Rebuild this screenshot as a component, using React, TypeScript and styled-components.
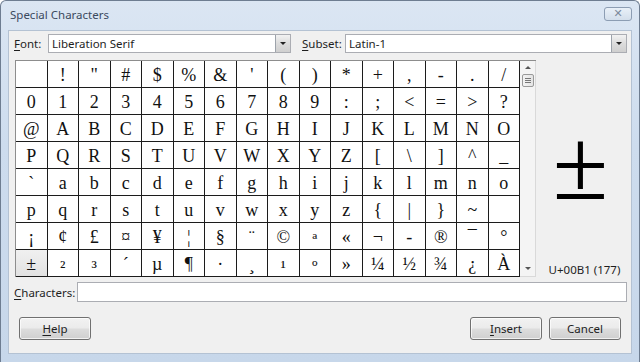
import React from 'react';
import styled, { createGlobalStyle } from 'styled-components';

const GlobalStyle = createGlobalStyle`
  html, body {
    margin: 0;
    padding: 0;
    background: #ffffff;
  }
  body {
    font-family: "Noto Sans", "Open Sans", sans-serif;
  }
`;

const Window = styled.div`
  width: 640px;
  height: 362px;
  box-sizing: border-box;
  border: 1px solid #6e7d91;
  border-bottom: none;
  border-radius: 6px 6px 0 0;
  background: linear-gradient(180deg, #dbe6f3 0%, #cddcee 40%, #c7d7ea 100%);
  display: flex;
  flex-direction: column;
  padding: 0 7px 8px 7px;
  overflow: hidden;
`;

const TitleBar = styled.div`
  height: 29px;
  display: flex;
  align-items: center;
  justify-content: space-between;
  padding-left: 2px;
  flex-shrink: 0;
`;

const Title = styled.div`
  font-size: 11.5px;
  color: #3b4a5e;
  margin-top: -2px;
`;

const CloseButton = styled.div`
  width: 26px;
  height: 12px;
  margin-top: -4px;
  border: 1px solid #8c9db3;
  border-radius: 3px;
  background: linear-gradient(180deg, #e9f0f8 0%, #d3deeb 100%);
  display: flex;
  align-items: center;
  justify-content: center;
  color: #7d8a9c;
  font-size: 11px;
  font-weight: bold;
  line-height: 1;
  font-family: "DejaVu Sans", sans-serif;
`;

const Client = styled.div`
  flex: 1;
  background: #f0f0f0;
  border: 1px solid #b4c2d3;
  display: flex;
  flex-direction: column;
  font-size: 11.5px;
  color: #1e1e1e;
`;

const FieldRow = styled.div`
  display: flex;
  align-items: center;
  height: 19px;
  margin-top: 3px;
  padding: 0 4px 0 5px;
`;

const Label = styled.span<{ $w?: number }>`
  width: ${(p) => p.$w ?? 34}px;
  flex-shrink: 0;
  font-size: 11.5px;
`;

const Combo = styled.div<{ $w: number }>`
  width: ${(p) => p.$w}px;
  height: 19px;
  box-sizing: border-box;
  border: 1px solid #abadb3;
  background: #fff;
  display: flex;
  align-items: center;
  font-size: 11.5px;
  padding-left: 3px;
`;

const ComboText = styled.span`
  flex: 1;
`;

const DropButton = styled.div`
  width: 15px;
  height: 17px;
  box-sizing: border-box;
  border-left: 1px solid #9da3ab;
  background: linear-gradient(180deg, #f2f2f2 0%, #dcdcdc 50%, #cfcfcf 100%);
  display: flex;
  align-items: center;
  justify-content: center;
`;

const Arrow = styled.div<{ $up?: boolean; $c?: string }>`
  width: 0;
  height: 0;
  border-left: 3px solid transparent;
  border-right: 3px solid transparent;
  ${(p) =>
    p.$up
      ? `border-bottom: 3px solid ${p.$c ?? '#222'};`
      : `border-top: 3px solid ${p.$c ?? '#222'};`}
`;

const Spacer = styled.div<{ $w: number }>`
  width: ${(p) => p.$w}px;
  flex-shrink: 0;
`;

const Middle = styled.div`
  display: flex;
  margin-top: 7px;
  padding-left: 6px;
  height: 217px;
`;

const TableBox = styled.div`
  display: flex;
  border-top: 1px solid #8d8d8d;
  border-left: 1px solid #8d8d8d;
  background: #fff;
`;

const CharGrid = styled.div`
  width: 504px;
  display: grid;
  grid-template-columns: repeat(16, 1fr);
  grid-template-rows: repeat(8, 27px);
`;

const Cell = styled.div<{ $sel?: boolean; $shift?: number }>`
  box-sizing: border-box;
  border-right: 1px solid #1c1c1c;
  border-bottom: 1px solid #1c1c1c;
  background: ${(p) => (p.$sel ? 'linear-gradient(180deg, #f0f0f0 0%, #e2e2e2 100%)' : '#ffffff')};
  display: flex;
  align-items: center;
  justify-content: center;
  font-family: "Liberation Serif", "DejaVu Serif", serif;
  font-size: 18px;
  color: #111;
  line-height: 1;
  padding-top: ${(p) => 1 + (p.$shift ?? 0)}px;
`;

const ScrollBar = styled.div`
  width: 16px;
  box-sizing: border-box;
  background: #f4f4f4;
  border-right: 1px solid #d9d9d9;
  border-bottom: 1px solid #d9d9d9;
  display: flex;
  flex-direction: column;
  align-items: center;
  padding: 5px 0 6px;
`;

const Thumb = styled.div`
  width: 12px;
  height: 13px;
  margin-top: 5px;
  box-sizing: border-box;
  border: 1px solid #9a9a9a;
  border-radius: 2px;
  background: linear-gradient(90deg, #f3f3f3 0%, #e4e4e4 100%);
  display: flex;
  flex-direction: column;
  align-items: center;
  justify-content: center;
  gap: 1px;
`;

const Grip = styled.div`
  width: 6px;
  height: 1px;
  background: #777;
`;

const TrackFill = styled.div`
  flex: 1;
`;

const Preview = styled.div`
  flex: 1;
  display: flex;
  flex-direction: column;
  align-items: center;
`;

const BigChar = styled.div`
  margin-top: 50px;
  height: 110px;
  font-family: "Liberation Serif", "DejaVu Serif", serif;
  font-size: 101px;
  line-height: 110px;
  color: #000;
  margin-right: 6px;
`;

const CodeLabel = styled.div`
  margin-top: auto;
  margin-left: 2px;
  font-size: 11.5px;
  color: #1e1e1e;
`;

const CharsRow = styled.div`
  display: flex;
  align-items: center;
  margin-top: 5px;
  padding: 0 4px 0 5px;
  height: 20px;
`;

const TextInput = styled.div`
  flex: 1;
  height: 20px;
  box-sizing: border-box;
  border: 1px solid #abadb3;
  background: #fff;
`;

const ButtonRow = styled.div`
  display: flex;
  align-items: center;
  margin-top: 15px;
  padding: 0 10px 0 10px;
`;

const Button = styled.div`
  width: 72px;
  height: 23px;
  box-sizing: border-box;
  border: 1px solid #707070;
  border-radius: 3px;
  background: linear-gradient(180deg, #f2f2f2 0%, #ebebeb 48%, #dddddd 52%, #cfcfcf 100%);
  box-shadow: inset 0 0 0 1px rgba(255, 255, 255, 0.7);
  display: flex;
  align-items: center;
  justify-content: center;
  font-size: 11.5px;
  color: #1e1e1e;
`;

const Grow = styled.div`
  flex: 1;
`;

const U = styled.span`
  text-decoration: underline;
  text-underline-offset: 2px;
`;

const chars: string[] = [];
for (let c = 0x20; c <= 0x7e; c++) chars.push(String.fromCharCode(c));
chars.push('');
for (let c = 0xa1; c <= 0xc0; c++) {
  chars.push(c === 0xad ? '-' : String.fromCharCode(c));
}

// superscript-like glyphs are drawn centred in the reference
const lowered: Record<string, number> = { '²': 6, '³': 6, '¹': 6, 'º': 6, 'ª': 6 };

export default function App() {
  return (
    <>
      <GlobalStyle />
      <Window>
        <TitleBar>
          <Title>Special Characters</Title>
          <CloseButton>✕</CloseButton>
        </TitleBar>
        <Client>
          <FieldRow>
            <Label><U>F</U>ont:</Label>
            <Combo $w={243}>
              <ComboText>Liberation Serif</ComboText>
              <DropButton><Arrow /></DropButton>
            </Combo>
            <Spacer $w={11} />
            <Label $w={43}><U>S</U>ubset:</Label>
            <Combo $w={282}>
              <ComboText>Latin-1</ComboText>
              <DropButton><Arrow /></DropButton>
            </Combo>
          </FieldRow>
          <Middle>
            <TableBox>
              <CharGrid>
                {chars.map((ch, i) => (
                  <Cell key={i} $sel={i === 112} $shift={lowered[ch]}>
                    {ch === ' ' ? '\u00a0' : ch}
                  </Cell>
                ))}
              </CharGrid>
              <ScrollBar>
                <Arrow $up $c="#555" />
                <Thumb>
                  <Grip />
                  <Grip />
                  <Grip />
                </Thumb>
                <TrackFill />
                <Arrow $c="#555" />
              </ScrollBar>
            </TableBox>
            <Preview>
              <BigChar>±</BigChar>
              <CodeLabel>U+00B1 (177)</CodeLabel>
            </Preview>
          </Middle>
          <CharsRow>
            <Label $w={63}><U>C</U>haracters:</Label>
            <TextInput />
          </CharsRow>
          <ButtonRow>
            <Button><U>H</U>elp</Button>
            <Grow />
            <Button><U>I</U>nsert</Button>
            <Spacer $w={7} />
            <Button>Cancel</Button>
          </ButtonRow>
        </Client>
      </Window>
    </>
  );
}
